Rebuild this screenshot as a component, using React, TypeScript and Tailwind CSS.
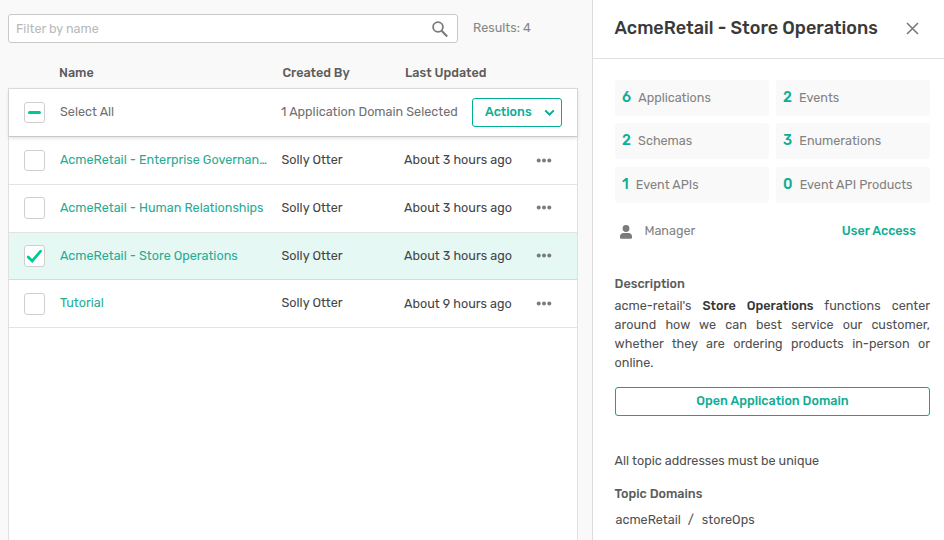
import type { ReactNode } from "react";

type Domain = {
  name: string;
  updated: string;
  rowClass: string;
  boxClass: string;
  timeClass: string;
  dotsClass: string;
  checked?: boolean;
};

const domains: Domain[] = [
  {
    name: "AcmeRetail - Enterprise Governan…",
    updated: "About 3 hours ago",
    rowClass: "h-12 border-[#e3e3e3]",
    boxClass: "mt-[13px] h-[21px]",
    timeClass: "pt-[13px]",
    dotsClass: "mt-[21px]",
  },
  {
    name: "AcmeRetail - Human Relationships",
    updated: "About 3 hours ago",
    rowClass: "h-12 border-[#e3e3e3]",
    boxClass: "mt-3 h-[22px]",
    timeClass: "pt-[13px]",
    dotsClass: "mt-[20.4px]",
  },
  {
    name: "AcmeRetail - Store Operations",
    updated: "About 3 hours ago",
    rowClass: "h-[47px] border-[#cfdedb] bg-[#e5f8f4]",
    boxClass: "mt-3 h-[22px]",
    timeClass: "pt-[13px]",
    dotsClass: "mt-[20.4px]",
    checked: true,
  },
  {
    name: "Tutorial",
    updated: "About 9 hours ago",
    rowClass: "h-12 border-[#e3e3e3]",
    boxClass: "mt-[13px] h-[22px]",
    timeClass: "pt-[14px]",
    dotsClass: "mt-[21.4px]",
  },
];

const stats = [
  { count: 6, label: "Applications" },
  { count: 2, label: "Events" },
  { count: 2, label: "Schemas" },
  { count: 3, label: "Enumerations" },
  { count: 1, label: "Event APIs" },
  { count: 0, label: "Event API Products" },
];

function CheckBox({ className, children }: { className: string; children?: ReactNode }) {
  return (
    <div
      className={`flex w-[21px] shrink-0 items-center justify-center rounded-[3px] border border-[#cfcfcf] bg-white ${className}`}
    >
      {children}
    </div>
  );
}

function DomainRow({ d }: { d: Domain }) {
  return (
    <div className={`flex items-start border-b pl-[15px] leading-5 text-[#444] ${d.rowClass}`}>
      <CheckBox className={d.boxClass}>
        {d.checked && (
          <svg width="17" height="16" viewBox="0 0 17 16" fill="none" className="shrink-0">
            <path d="M2.2 9L6.2 13L14.6 3.2" stroke="#00c895" strokeWidth="2.7" strokeLinecap="round" />
          </svg>
        )}
      </CheckBox>
      <div className="ml-[15px] w-[221.5px] shrink-0 whitespace-nowrap pt-[13px] text-[#26ab94]">{d.name}</div>
      <div className="w-[122.5px] shrink-0 pt-[13px]">Solly Otter</div>
      <div className={`w-[132px] shrink-0 ${d.timeClass}`}>{d.updated}</div>
      <svg width="16" height="5" viewBox="0 0 16 5" fill="#7b7b7b" className={d.dotsClass}>
        <circle cx="2.7" cy="2.5" r="2" />
        <circle cx="8" cy="2.5" r="2" />
        <circle cx="13.3" cy="2.5" r="2" />
      </svg>
    </div>
  );
}

function DomainList() {
  return (
    <section className="flex w-[592px] shrink-0 flex-col bg-[#f9f9f9] pl-2 pt-[14px]">
      <div className="flex h-[29px] items-center">
        <div className="flex h-[29px] w-[450px] items-center justify-between rounded-[3px] border border-[#c9c9c9] bg-white pl-[7px] pr-[9px]">
          <span className="pt-px text-[#b9b9b9]">Filter by name</span>
          <svg width="16" height="17" viewBox="0 0 16 17" fill="none" stroke="#7b7b7b" className="mt-px">
            <circle cx="6" cy="6" r="4.9" strokeWidth="1.8" />
            <path d="M9.6 9.8L15.2 15.5" strokeWidth="2.1" />
          </svg>
        </div>
        <span className="ml-[15px] pb-px text-[#868686]">Results: 4</span>
      </div>

      <div className="mt-5 flex h-[25px] pl-[51px] font-medium leading-5 text-[#5c5c5c]">
        <span className="w-[223.4px]">Name</span>
        <span className="w-[122.6px]">Created By</span>
        <span>Last Updated</span>
      </div>

      <div className="flex w-[570px] flex-1 flex-col border-x border-t border-[#e0e0e0] bg-white">
        <div className="z-10 flex h-12 shrink-0 items-start border-b border-[#c8c8c8] pl-[15px] pr-[15px] text-[#707070] shadow-[0_1px_4px_rgba(0,0,0,0.14)]">
          <CheckBox className="mt-[13px] h-[21px]">
            <span className="h-[3px] w-[13px] rounded-full bg-[#00c895]" />
          </CheckBox>
          <span className="ml-[15px] w-[221px] shrink-0 pt-[13px] leading-5">Select All</span>
          <span className="shrink-0 whitespace-nowrap pt-[13px] leading-5">1 Application Domain Selected</span>
          <button className="ml-auto mt-[9px] flex h-[29px] w-[90px] shrink-0 items-center justify-between rounded-[3px] border border-[#00ad93] pl-3 pr-[6px] font-medium text-[#10ad95]">
            <span className="pb-px">Actions</span>
            <svg width="11" height="8" viewBox="0 0 11 8" fill="none" className="mt-px">
              <path d="M1.2 1.4L5.5 5.7L9.8 1.4" stroke="#00ad93" strokeWidth="2" />
            </svg>
          </button>
        </div>
        {domains.map((d) => (
          <DomainRow key={d.name} d={d} />
        ))}
      </div>
    </section>
  );
}

function DetailsPanel() {
  return (
    <aside className="flex flex-1 flex-col border-l border-[#dcdcdc] bg-white text-[#505050]">
      <header className="flex h-[59px] shrink-0 items-center justify-between border-b border-[#e2e2e2] pb-[2px] pl-[21.5px] pr-[25px]">
        <h1 className="whitespace-nowrap text-[18px] font-medium text-[#3a3a3a]">AcmeRetail - Store Operations</h1>
        <svg width="13" height="13" viewBox="0 0 13 13" className="mt-px" stroke="#7a7a7a" strokeWidth="1.6">
          <path d="M1 1L12 12M12 1L1 12" />
        </svg>
      </header>

      <div className="flex flex-col pl-[22px] pr-[14px] pt-[21px]">
        <div className="grid grid-cols-[154px_154px] gap-x-[7px] gap-y-[7.45px]">
          {stats.map((s) => (
            <div
              key={s.label}
              className="flex h-9 items-baseline rounded-[3px] bg-[#f9f9f9] pl-[7px] leading-[35px]"
            >
              <span className="text-[14.4px] font-medium text-[#10ad95]">{s.count}</span>
              <span className="ml-[7.2px] whitespace-nowrap text-[#828282]">{s.label}</span>
            </div>
          ))}
        </div>

        <div className="mt-[18px] flex h-5 items-center pl-[5px] pr-[14px] leading-5">
          <svg width="12" height="14" viewBox="0 0 12 14" fill="#7b7b7b" className="mt-[2px]">
            <circle cx="6" cy="3.5" r="3.4" />
            <path d="M0 11.6C0 9.3 1.6 8 3.4 8H8.6C10.4 8 12 9.3 12 11.6V12.6Q12 13.8 10.8 13.8H1.2Q0 13.8 0 12.6Z" />
          </svg>
          <span className="ml-[12.4px] text-[#828282]">Manager</span>
          <span className="ml-auto font-medium text-[#10ad95]">User Access</span>
        </div>

        <h2 className="-ml-[0.4px] mt-[33px] font-medium leading-5 text-[#5c5c5c]">Description</h2>
        <p className="-ml-[0.4px] mt-[2px] text-justify leading-[19px]">
          acme-retail's <b className="font-medium text-[#363636]">Store Operations</b> functions center around how we
          can best service our customer, whether they are ordering products in-person or online.
        </p>

        <button className="mt-[15px] flex h-[29px] items-start justify-center rounded-[3px] border border-[#00ad93] pt-[3px] font-medium leading-5 text-[#10ad95]">
          Open Application Domain
        </button>

        <p className="-ml-[0.4px] mt-[35px] leading-5">All topic addresses must be unique</p>
        <h2 className="-ml-[0.4px] mt-[13px] font-medium leading-5 text-[#5c5c5c]">Topic Domains</h2>
        <div className="mt-[6px] flex pl-[0.5px] leading-5">
          <span>acmeRetail</span>
          <span className="ml-[7px] w-[14px]">/</span>
          <span>storeOps</span>
        </div>
      </div>
    </aside>
  );
}

export default function App() {
  return (
    <div className="flex h-[540px] w-[944px] overflow-hidden bg-white font-[Rubik,Roboto,sans-serif] text-[12.6px]">
      <DomainList />
      <DetailsPanel />
    </div>
  );
}
